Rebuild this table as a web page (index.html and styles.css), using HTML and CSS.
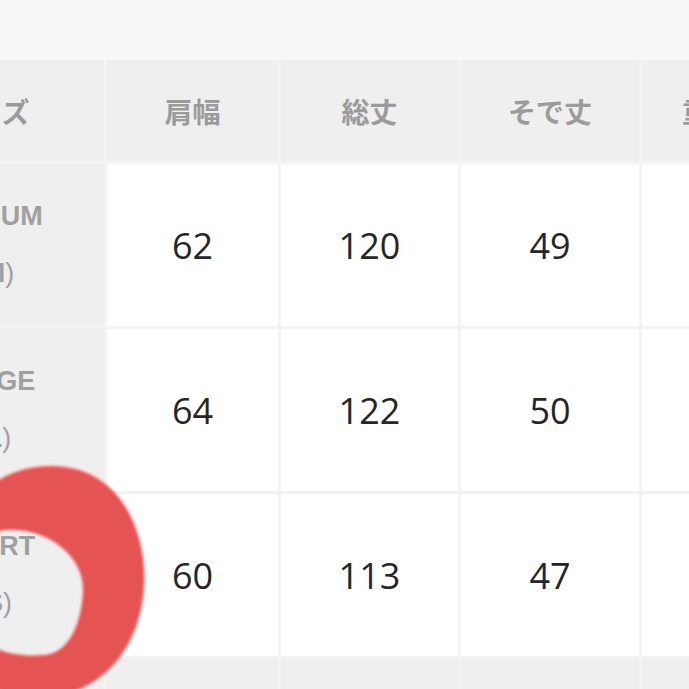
FILE: index.html
```html
<!DOCTYPE html>
<html lang="ja">
<head>
<meta charset="utf-8">
<link rel="stylesheet" href="styles.css">
</head>
<body>
<div class="page">
  <div class="topband"></div>
  <div class="table">
    <div class="cell head side-head">サイズ</div>
    <div class="cell head">肩幅</div>
    <div class="cell head">総丈</div>
    <div class="cell head">そで丈</div>
    <div class="cell head last-head">重量(g)</div>

    <div class="cell side"><span>MEDIUM</span><span class="paren"><b>(M</b>)</span></div>
    <div class="cell num">62</div>
    <div class="cell num">120</div>
    <div class="cell num">49</div>
    <div class="cell num"></div>

    <div class="cell side"><span>LARGE</span><span class="paren"><b>(L</b>)</span></div>
    <div class="cell num">64</div>
    <div class="cell num">122</div>
    <div class="cell num">50</div>
    <div class="cell num"></div>

    <div class="cell side"><span>SHORT</span><span class="paren"><b>(S</b>)</span></div>
    <div class="cell num">60</div>
    <div class="cell num">113</div>
    <div class="cell num">47</div>
    <div class="cell num"></div>

    <div class="cell side"></div>
    <div class="cell head"></div>
    <div class="cell head"></div>
    <div class="cell head"></div>
    <div class="cell head"></div>
  </div>
  <svg class="ring" width="260" height="260" viewBox="0 0 260 260" aria-hidden="true">
    <path fill="#e65353" fill-rule="evenodd"
      d="M 98 18 C 174 16 198 90 194 140 C 190 202 150 248 90 250 C 40 252 -2 215 -8 160 C -14 90 26 20 98 18 Z
         M 58 82 C 100 80 134 110 133 142 C 132 176 118 205 95 207 C 60 210 25 200 15 165 C 5 120 22 84 58 82 Z"/>
  </svg>
</div>
</body>
</html>
```
FILE: styles.css
```css
html, body {
  margin: 0;
  padding: 0;
  background: #ffffff;
}
.page {
  position: relative;
  width: 689px;
  height: 689px;
  overflow: hidden;
  background: #f7f7f7;
}
.topband {
  height: 60px;
  background: #f8f8f8;
}
.table {
  display: grid;
  grid-template-columns: 232px 171px 177px 178px 178px;
  grid-template-rows: 101px 162px 162px 162px 60px;
  gap: 3px;
  margin-left: -128px;
  width: 960px;
  background: #f3f3f3;
}
.cell {
  display: flex;
  align-items: center;
  justify-content: center;
  background: #ffffff;
}
.head {
  background: #efefef;
  color: #9b9b9b;
  font-family: "Noto Sans CJK JP", "Noto Sans", sans-serif;
  font-weight: 700;
  font-size: 28px;
}
.last-head {
  justify-content: flex-start;
  padding-left: 40px;
}
.side {
  background: #efefef;
  color: #a0a0a0;
  font-family: "Liberation Sans", "Noto Sans CJK JP", sans-serif;
  font-weight: 700;
  font-size: 27px;
  flex-direction: column;
  line-height: 57px;
}
.side .paren {
  font-weight: 400;
  padding-left: 12px;
}
.side .paren b {
  font-weight: 700;
}
.num {
  color: #262626;
  font-family: "Open Sans", "Noto Sans", sans-serif;
  font-size: 36px;
  font-weight: 400;
}
.ring {
  position: absolute;
  left: -50px;
  top: 448px;
  filter: blur(1.5px);
}
```
